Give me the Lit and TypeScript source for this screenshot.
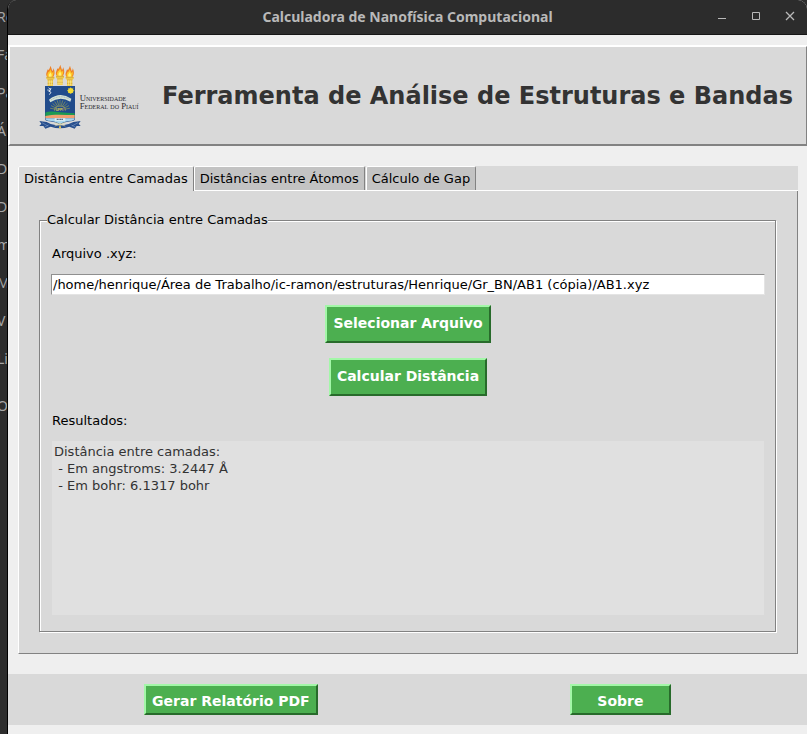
import { LitElement, html, css, svg } from "lit";
import { customElement, state } from "lit/decorators.js";
import { classMap } from "lit/directives/class-map.js";

@customElement("ufpi-logo")
class UfpiLogo extends LitElement {
  static styles = css`
    :host { display: block; flex: none; }
    svg { display: block; width: 120px; height: 80px; }
    .name { font-family: "Liberation Serif", serif; font-variant: small-caps; font-size: 26px; fill: #2c2c30; }
    .mono { font-family: "Liberation Sans", sans-serif; font-weight: bold; font-size: 10px; fill: #e8d44a; }
  `;

  private torch(x: number, y: number) {
    return svg`
      <g transform="translate(${x} ${y})">
        <path d="M-9 30 C-16 20 -10 15 -8 6 C-5 10 -3 6 1 -5 C3 3 5 6 6 11 C9 8 9 6 9 2 C15 14 13 24 8 30 Z" fill="#ee8228"/>
        <path d="M-8 28 C-11 20 -7 18 -6 14 C-3 15 -1 10 0 6 C2 11 4 14 5 17 C8 16 8 14 9 12 C10 18 9 24 6 28 Z" fill="#ffc926"/>
        <path d="M-4 28 C-6 21 -1 19 0 15 C2 19 6 22 3 28 Z" fill="#fff27a"/>
        <path d="M-12 28 H12 V34 L8 38 V56 H-8 V38 L-12 34 Z" fill="#f2cd4c"/>
        <path d="M-12 31 H12 M-8 38 H8 M-8 48 H8" stroke="#b98a24" stroke-width="1.5"/>
        <path d="M-3 39 V54 M3 39 V54" stroke="#fff0a0" stroke-width="2"/>
      </g>`;
  }

  render() {
    const rays = [-80, -64, -48, -32, -16, 0, 16, 32, 48, 64, 80];
    return html`
      <svg viewBox="0 0 360 240" role="img" aria-label="Universidade Federal do Piauí">
        ${this.torch(61, 34)}${this.torch(90, 31)}${this.torch(119, 34)}
        <path d="M28 195 L50 198 L62 204 Q90 212 116 204 L130 198 L152 195 L146 203 L152 210 L140 210 L134 218 L118 212 Q90 222 62 212 L46 218 L40 210 L28 210 L34 203 Z" fill="#28508e"/>
        <path d="M36 200 L54 210 M144 200 L126 210 M44 213 L56 207 M136 213 L124 207" stroke="#8ea6cc" stroke-width="1.5"/>
        <path d="M45 90 H135 V188 Q135 194 128 195 Q104 197 90 206 Q76 197 52 195 Q45 194 45 188 Z" fill="#214c8c"/>
        <path d="M46 170 C64 162 84 170 134 172 V182 H46 Z" fill="#1d9a52"/>
        <path d="M46 180 C70 174 100 177 134 177 V187 H46 Z" fill="#f0a070"/>
        <path d="M46 187 H134 Q134 193 126 194 Q104 195 90 204 Q76 195 54 194 Q46 193 46 187 Z" fill="#a8d7ee"/>
        <path d="M74 187 H106 V194 H74 Z" fill="#e3eef0"/>
        <path d="M80 190 H100" stroke="#54718a" stroke-width="4" stroke-dasharray="4 1"/>
        <g stroke="#a5a94e" stroke-width="1.6">
          ${rays.map((a) => svg`<path d="M90 148 V132" transform="rotate(${a} 90 162)"/>`)}
        </g>
        <path d="M74 164 Q74 150 90 150 Q106 150 106 164" fill="none" stroke="#c9bd4e" stroke-width="2"/>
        <text class="mono" x="77" y="165">UFPI</text>
        <path d="M57 131 Q90 105 124 128 L121 137 Q90 119 61 139 Z" fill="#d5e2d7"/>
        <path d="M64 131 Q90 115 118 129" fill="none" stroke="#7f9da2" stroke-width="2" stroke-dasharray="3 2"/>
        <circle cx="122" cy="104" r="8" fill="#f5dd32"/>
        <path d="M111 104 H133 M122 94 V114 M114 97 L130 111 M130 97 L114 111" stroke="#f5dd32" stroke-width="2"/>
        <path d="M56 95 L61 101 L56 105 L63 109 L58 116 M63 96 L58 108 M52 102 H56" fill="none" stroke="#dce6ee" stroke-width="3"/>
        <path d="M74 200 L106 210 M106 200 L74 210 M90 200 V220" stroke="#e7dca0" stroke-width="2"/>
        <circle cx="90" cy="214" r="3" fill="#efc945"/>
        <text class="name" x="149" y="136">Universidade</text>
        <text class="name" x="149" y="159">Federal do Piauí</text>
      </svg>`;
  }
}

@customElement("app-root")
class AppRoot extends LitElement {
  @state() private tab = 0;

  private tabs = ["Distância entre Camadas", "Distâncias entre Átomos", "Cálculo de Gap"];
  private menu = ["Re", "Fa", "Pa", "Á", "D", "D", "m", "M", "V", "Li"];

  static styles = css`
    :host { display: flex; min-height: 100vh; overflow: hidden; background: #2d2d2d; font-family: "DejaVu Sans", sans-serif; font-size: 13px; line-height: 17px; color: #000; }
    * { box-sizing: border-box; }
    button, input, textarea { font: inherit; border-radius: 0; margin: 0; }
    .behind { flex: none; width: 7px; overflow: hidden; color: #a6a6a6; font-family: "Noto Sans", sans-serif; font-size: 14px; }
    .behind ul { list-style: none; margin: 0; padding: 0; }
    .behind li { height: 38px; line-height: 34px; white-space: nowrap; margin-left: -3px; }
    .behind .last { margin-top: 9px; }
    .window { flex: 1; min-width: 0; display: flex; flex-direction: column; border-left: 1px solid #000; background: #efefef; border-top-left-radius: 9px; border-top-right-radius: 9px; overflow: hidden; }
    .titlebar { height: 35px; background: #2c2c2c; border-bottom: 1px solid #161616; display: grid; grid-template-columns: 1fr auto 1fr; align-items: center; color: #b9b9b9; }
    .titlebar h2 { grid-column: 2; margin: 0; font: bold 14px/20px "Noto Sans", sans-serif; }
    .controls { display: flex; justify-content: flex-end; gap: 14px; padding-right: 7px; }
    .controls button { width: 20px; height: 20px; padding: 0; border: 0; background: none; color: inherit; }
    .controls svg { display: block; width: 20px; height: 20px; fill: none; stroke: currentColor; }
    .banner { margin-top: 10px; margin-right: -1px; height: 101px; display: flex; align-items: center; gap: 12px; padding-left: 20px; background: #d9d9d9; border: 2px solid; border-color: #fff #828282 #828282 #fff; }
    .banner h1 { margin: 0; font-size: 24px; line-height: 28px; color: #333; white-space: nowrap; }
    .notebook { flex: 1; display: flex; flex-direction: column; margin: 20px 9px 20px 10px; background: #d9d9d9; }
    .tabs { display: flex; height: 25px; border-bottom: 1px solid #fff; }
    .tab { height: 24px; padding: 0 5px 1px; margin-right: 1px; background: #c3c3c3; border: 1px solid; border-color: #fff #828282 transparent #fff; border-bottom: 0; border-top-left-radius: 2px; border-top-right-radius: 2px; color: #000; white-space: nowrap; }
    .tab.active { height: 25px; padding-bottom: 2px; background: #d9d9d9; margin-right: 0; }
    .page { flex: 1; display: flex; flex-direction: column; padding: 20px; border: 1px solid; border-color: transparent #828282 #828282 #fff; border-top: 0; }
    fieldset { flex: 1; min-width: 0; margin: 0 1px 1px 0; padding: 0 10px 16px 11px; border: 1px solid #828282; box-shadow: inset 1px 1px #fff, 1px 1px #fff; display: flex; flex-direction: column; }
    legend { padding: 0; margin-left: -4px; line-height: 18px; background: #d9d9d9; }
    .form { display: flex; flex-direction: column; align-items: center; height: 100%; padding-top: 16px; }
    label { align-self: flex-start; padding-left: 1px; }
    .path { margin: 12px 0 10px; width: 100%; height: 21px; padding: 0 1px; background: #fff; border: 1px solid; border-color: #8f8f8f #e4e4e4 #e4e4e4 #8f8f8f; }
    .action { background: #4caf50; color: #fff; font-size: 14px; font-weight: bold; padding: 0 6px 2px; height: 38px; border: 2px solid; border-color: #a3f7a8 #286b2b #286b2b #a3f7a8; white-space: nowrap; }
    .second { margin: 15px 0 16px; }
    .result { flex: 1; align-self: stretch; min-height: 174px; margin: 12px 1px 0; padding: 2px; border: 0; resize: none; background: #e0e0e0; color: #333; outline: 0; }
    .footer { height: 51px; display: flex; align-items: center; justify-content: space-around; padding: 0 10px; background: #d9d9d9; margin-bottom: 9px; }
    .footer .action { height: 31px; padding: 4px 6px 0; }
    .about { min-width: 101px; }
  `;

  render() {
    return html`
      <div class="behind" aria-hidden="true">
        <ul>
          ${this.menu.map((m) => html`<li>${m}</li>`)}
          <li class="last">O</li>
        </ul>
      </div>
      <div class="window">
        <div class="titlebar">
          <h2>Calculadora de Nanofísica Computacional</h2>
          <div class="controls">
            <button aria-label="Minimizar"><svg viewBox="0 0 20 20"><path d="M6 11.5H14"/></svg></button>
            <button aria-label="Maximizar"><svg viewBox="0 0 20 20"><path d="M6.5 5.5H13.5V12.5H6.5Z"/></svg></button>
            <button aria-label="Fechar"><svg viewBox="0 0 20 20"><path d="M6 5L14 13M14 5L6 13" stroke-width="1.3"/></svg></button>
          </div>
        </div>
        <header class="banner">
          <ufpi-logo></ufpi-logo>
          <h1>Ferramenta de Análise de Estruturas e Bandas</h1>
        </header>
        <main class="notebook">
          <div class="tabs" role="tablist">
            ${this.tabs.map(
              (t, i) => html`<button role="tab" aria-selected=${i === this.tab} class=${classMap({ tab: true, active: i === this.tab })} @click=${() => (this.tab = i)}>${t}</button>`
            )}
          </div>
          <section class="page">
            <fieldset>
              <legend>Calcular Distância entre Camadas</legend>
              <div class="form">
                <label for="path">Arquivo .xyz:</label>
                <input class="path" id="path" type="text" spellcheck="false" value="/home/henrique/Área de Trabalho/ic-ramon/estruturas/Henrique/Gr_BN/AB1 (cópia)/AB1.xyz" />
                <button class="action">Selecionar Arquivo</button>
                <button class="action second">Calcular Distância</button>
                <label for="result">Resultados:</label>
                <textarea class="result" id="result" readonly spellcheck="false" .value=${"Distância entre camadas:\n - Em angstroms: 3.2447 Å\n - Em bohr: 6.1317 bohr"}></textarea>
              </div>
            </fieldset>
          </section>
        </main>
        <footer class="footer">
          <button class="action">Gerar Relatório PDF</button>
          <button class="action about">Sobre</button>
        </footer>
      </div>`;
  }
}
